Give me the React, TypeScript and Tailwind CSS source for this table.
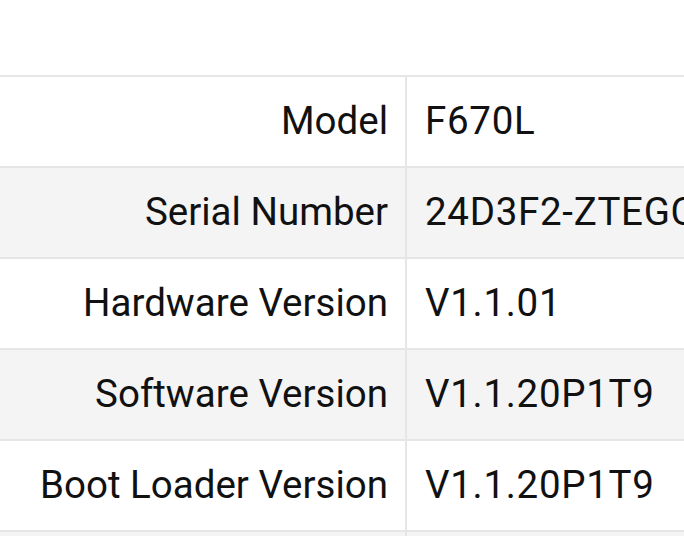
const rows = [
  { label: 'Model', value: 'F670L' },
  { label: 'Serial Number', value: '24D3F2-ZTEGC8A1B2C3' },
  { label: 'Hardware Version', value: 'V1.1.01' },
  { label: 'Software Version', value: 'V1.1.20P1T9' },
  { label: 'Boot Loader Version', value: 'V1.1.20P1T9' },
  { label: '', value: '' },
]

export default function App() {
  return (
    <div className="w-[684px] h-[536px] overflow-hidden bg-white text-[#111111] font-['Roboto',sans-serif]">
      <div className="h-[75px]" />
      <div className="border-t-2 border-[#e6e6e6]">
        {rows.map((r, i) => (
          <div
            key={i}
            className={`flex h-[91px] border-b-2 border-[#e6e6e6] ${i % 2 === 1 ? 'bg-[#f4f4f4]' : 'bg-white'}`}
          >
            <div className="w-[405px] shrink-0 flex items-center justify-end pr-[17px] pb-[2px] text-[38.5px] whitespace-nowrap">
              {r.label}
            </div>
            <div className="w-[2px] bg-[#e6e6e6] shrink-0" />
            <div className="flex-1 flex items-center pl-[18px] pb-[2px] text-[38.5px] tracking-[0.7px] whitespace-nowrap overflow-hidden">
              {r.value}
            </div>
          </div>
        ))}
      </div>
    </div>
  )
}
